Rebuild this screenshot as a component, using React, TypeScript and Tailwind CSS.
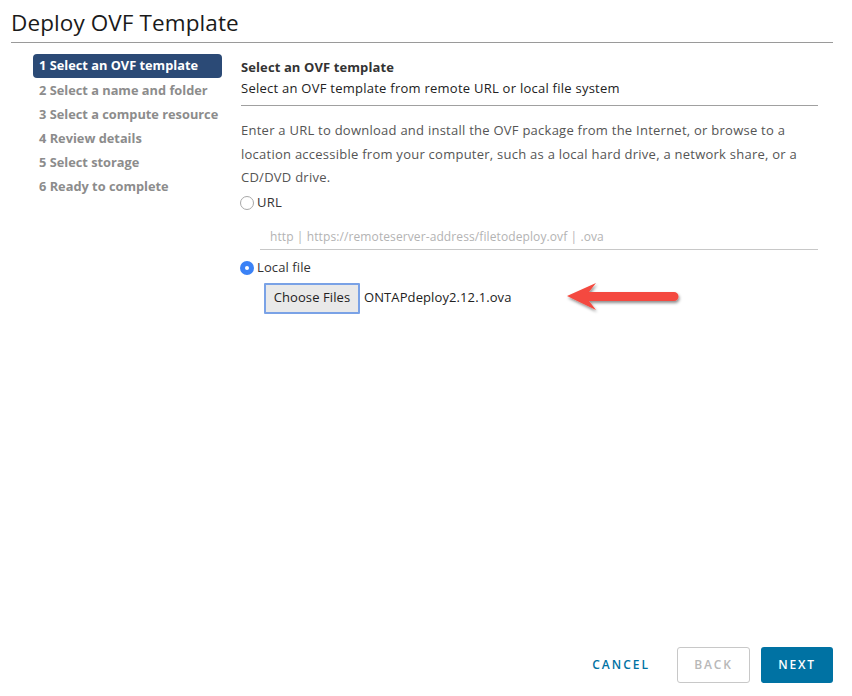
import React from 'react';

const steps = [
  '1 Select an OVF template',
  '2 Select a name and folder',
  '3 Select a compute resource',
  '4 Review details',
  '5 Select storage',
  '6 Ready to complete',
];

function Arrow() {
  return (
    <svg width="124" height="40" viewBox="0 0 124 40" className="absolute left-[562px] top-[278px]">
      <defs>
        <filter id="sh" x="-20%" y="-40%" width="140%" height="180%">
          <feDropShadow dx="1" dy="2" stdDeviation="1.5" floodColor="#000" floodOpacity="0.45" />
        </filter>
      </defs>
      <g filter="url(#sh)">
        <path d="M5 18 L34 5 L27 14 L112 14 A4.5 4.5 0 0 1 112 23 L27 23 L34 32 Z" fill="#f44a3f" />
      </g>
    </svg>
  );
}

export default function App() {
  return (
    <div className="relative w-[852px] h-[696px] bg-white flex flex-col text-[#333]" style={{ fontFamily: '"Open Sans", "Noto Sans", sans-serif' }}>
      {/* header */}
      <div className="mx-[11px] mr-[19px] border-b border-[#9a9a9a] pt-[9px] pb-[5px]">
        <h1 className="text-[22.5px] leading-[28px] text-[#1a1a1a] tracking-[0.1px]">Deploy OVF Template</h1>
      </div>

      <div className="flex flex-1 pt-[11px]">
        {/* steps */}
        <nav className="w-[189px] ml-[33px] flex flex-col">
          {steps.map((s, i) => (
            <div
              key={s}
              className={`h-[24px] flex items-center px-[6px] text-[12.8px] font-bold rounded-[4px] whitespace-nowrap ${
                i === 0 ? 'bg-[#2b4a76] text-white h-[22px] mb-[1px]' : 'text-[#8c8c8c]'
              }`}
            >
              {s}
            </div>
          ))}
        </nav>

        {/* content */}
        <div className="ml-[19px] mt-[3px] w-[577px] flex flex-col text-[13px] tracking-[0.25px]">
          <div className="border-b border-[#a0a0a0] pb-[6px]">
            <div className="font-bold leading-[21px] text-[#333] tracking-[0.1px]">Select an OVF template</div>
            <div className="leading-[21px] text-[#222]">Select an OVF template from remote URL or local file system</div>
          </div>
          <p className="mt-[13px] leading-[23.5px] text-[#555]">
            Enter a URL to download and install the OVF package from the Internet, or browse to a location accessible from your computer, such as a local hard drive, a network share, or a CD/DVD drive.
          </p>

          <label className="flex items-center -ml-[1px] mt-[1px] h-[24px] text-[#333]">
            <span className="w-[14px] h-[14px] rounded-full border border-[#a8a8a8] bg-white mr-[3px]" />
            URL
          </label>
          <div className="ml-[19px] mt-[11px] border-b border-[#c8c8c8] h-[24px] flex items-center pl-[10px] text-[12px] tracking-[0.1px] text-[#b3b3b3]">
            http | https://remoteserver-address/filetodeploy.ovf | .ova
          </div>

          <label className="flex items-center -ml-[1px] mt-[6px] h-[24px] text-[#333] tracking-[0.1px]">
            <span className="w-[14px] h-[14px] rounded-full bg-[#3b82f6] mr-[3px] flex items-center justify-center">
              <span className="w-[4px] h-[4px] rounded-full bg-white" />
            </span>
            Local file
          </label>
          <div className="ml-[23px] mt-[3px] flex items-center tracking-[0.1px]">
            <button className="h-[31px] w-[96px] bg-[#e9e9e9] border-2 border-[#7aa2e6] rounded-[1px] text-[#222]">
              Choose Files
            </button>
            <span className="ml-[4px] text-[#222]">ONTAPdeploy2.12.1.ova</span>
          </div>
        </div>
      </div>

      {/* footer */}
      <div className="flex items-center justify-end gap-[11px] pr-[19px] pb-[13px]">
        <button className="h-[36px] px-[13px] text-[12px] font-semibold tracking-[2px] text-[#0072a3]">CANCEL</button>
        <button className="h-[36px] w-[73px] ml-[3px] border border-[#c8c8c8] rounded-[3px] text-[12px] font-semibold tracking-[1.8px] text-[#b8b8b8]">BACK</button>
        <button className="h-[36px] w-[72px] rounded-[3px] bg-[#0072a3] text-[12px] font-semibold tracking-[1.8px] text-white">NEXT</button>
      </div>

      <Arrow />
    </div>
  );
}
